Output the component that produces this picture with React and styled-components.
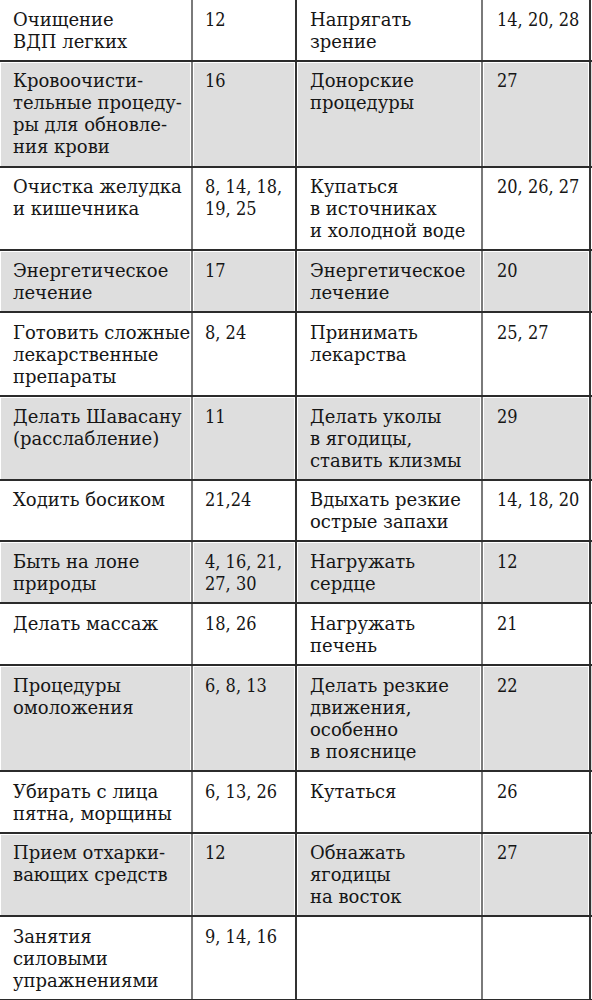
import React from "react";
import styled, { createGlobalStyle } from "styled-components";

const GlobalStyle = createGlobalStyle`
  html, body {
    margin: 0;
    padding: 0;
    background: #ffffff;
  }
  body {
    font-family: "DejaVu Serif", "Liberation Serif", serif;
    color: #161616;
  }
`;

const Table = styled.div`
  width: 592px;
  display: flex;
  flex-direction: column;
`;

const Row = styled.div`
  display: grid;
  grid-template-columns: 193px 104px 186px 108px;
  border-bottom: 2px solid #2b2b2b;
  background: ${(p) => (p.$shade ? "#dedede" : "#ffffff")};
`;

const Cell = styled.div`
  padding: 8.7px 4px 7.1px ${(p) => p.$pad}px;
  border-right: 2px solid ${(p) => (p.$dark ? "#333333" : "#7a7a7a")};
  font-family: ${(p) =>
    p.$numeric
      ? `"DejaVu Serif Condensed", "DejaVu Serif", serif`
      : `"DejaVu Serif", serif`};
  font-stretch: ${(p) => (p.$numeric ? "condensed" : "normal")};
  font-size: 18px;
  line-height: 22px;
  white-space: nowrap;
  overflow: hidden;
  box-shadow: ${(p) =>
    p.$shade ? "inset 1px 1px 0 #ffffff, inset -1px 0 0 #ffffff" : "none"};
`;

const Line = styled.span`
  display: block;
`;

const rows = [
  [["Очищение", "ВДП легких"], ["12"], ["Напрягать", "зрение"], ["14, 20, 28"]],
  [
    ["Кровоочисти-", "тельные процеду-", "ры для обновле-", "ния крови"],
    ["16"],
    ["Донорские", "процедуры"],
    ["27"],
  ],
  [
    ["Очистка желудка", "и кишечника"],
    ["8, 14, 18,", "19, 25"],
    ["Купаться", "в источниках", "и холодной воде"],
    ["20, 26, 27"],
  ],
  [["Энергетическое", "лечение"], ["17"], ["Энергетическое", "лечение"], ["20"]],
  [
    ["Готовить сложные", "лекарственные", "препараты"],
    ["8, 24"],
    ["Принимать", "лекарства"],
    ["25, 27"],
  ],
  [
    ["Делать Шавасану", "(расслабление)"],
    ["11"],
    ["Делать уколы", "в ягодицы,", "ставить клизмы"],
    ["29"],
  ],
  [["Ходить босиком"], ["21,24"], ["Вдыхать резкие", "острые запахи"], ["14, 18, 20"]],
  [["Быть на лоне", "природы"], ["4, 16, 21,", "27, 30"], ["Нагружать", "сердце"], ["12"]],
  [["Делать массаж"], ["18, 26"], ["Нагружать", "печень"], ["21"]],
  [
    ["Процедуры", "омоложения"],
    ["6, 8, 13"],
    ["Делать резкие", "движения,", "особенно", "в пояснице"],
    ["22"],
  ],
  [["Убирать с лица", "пятна, морщины"], ["6, 13, 26"], ["Кутаться"], ["26"]],
  [
    ["Прием отхарки-", "вающих средств"],
    ["12"],
    ["Обнажать", "ягодицы", "на восток"],
    ["27"],
  ],
  [["Занятия", "силовыми", "упражнениями"], ["9, 14, 16"], [], []],
];

const columns = [
  { pad: 13, dark: false, numeric: false },
  { pad: 12, dark: true, numeric: true },
  { pad: 13, dark: false, numeric: false },
  { pad: 14, dark: true, numeric: true },
];

export default function App() {
  return (
    <>
      <GlobalStyle />
      <Table>
        {rows.map((row, i) => {
          const shade = i % 2 === 1;
          return (
            <Row key={i} $shade={shade}>
              {row.map((lines, j) => (
                <Cell
                  key={j}
                  $pad={columns[j].pad}
                  $dark={columns[j].dark}
                  $numeric={columns[j].numeric}
                  $shade={shade}
                >
                  {lines.map((t, k) => (
                    <Line key={k}>{t}</Line>
                  ))}
                </Cell>
              ))}
            </Row>
          );
        })}
      </Table>
    </>
  );
}
